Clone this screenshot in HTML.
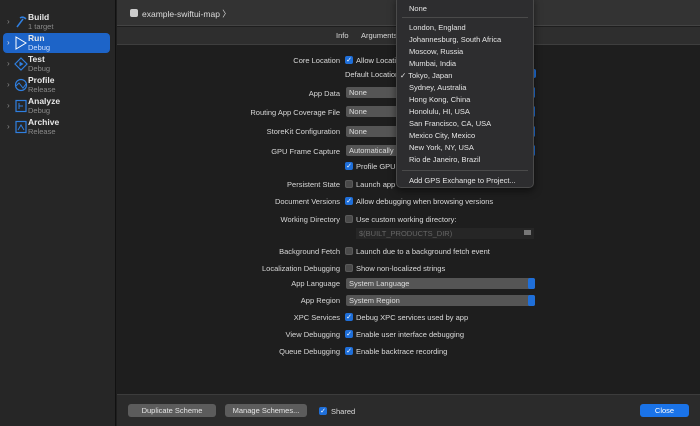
<!DOCTYPE html>
<html><head><style>
*{margin:0;padding:0;box-sizing:border-box}
body{width:700px;height:426px;background:#1e1e1e;font-family:"Liberation Sans",sans-serif;font-size:7.5px;color:#dcdcdc;position:relative;overflow:hidden}
.a{position:absolute;white-space:nowrap}
.side{left:0;top:0;width:116px;height:426px;background:#262626;border-right:1px solid #111}
.item{position:absolute;left:3px;width:107px;height:20px;border-radius:4px}
.item .t{position:absolute;left:25px;top:0px;font-weight:bold;color:#e8e8e8;font-size:8.5px}
.item .s{position:absolute;left:25px;top:10px;color:#8a8a8a;font-size:7.5px}
.item .c{position:absolute;left:4px;top:5px;color:#888;font-size:8px}
.item svg{position:absolute;left:11px;top:3px}
.lbl{right:360px;text-align:right;color:#d8d8d8}
.cb{width:8px;height:8px;border-radius:2px;background:#4a4a4a;border:1px solid #5a5a5a}
.cb.on{background:#1f6fd9;border-color:#1f6fd9;color:#fff;font-size:7px;line-height:7px;text-align:center}
.pop{left:346px;width:189px;height:11px;background:#555;border-radius:2px;color:#ddd;padding-left:3px;line-height:11px}
.pop:after{content:"";position:absolute;right:0;top:0;width:7px;height:11px;background:#1f6fd9;border-radius:2px}
.menu{left:396px;top:-4px;width:138px;height:192px;background:#2d2d2f;border:1px solid #4a4a4a;border-radius:5px;box-shadow:0 3px 8px rgba(0,0,0,.5)}
.mi{position:absolute;left:12px;color:#e6e6e6}
.sep{position:absolute;left:5px;width:126px;height:1px;background:#4a4a4a}
.btn{top:404px;height:13px;background:#5c5c5c;border-radius:3px;color:#e6e6e6;text-align:center;line-height:13px;font-size:7.5px}
</style></head><body>
<div class="a side">
 <div class="item" style="top:12px"><span class="c">›</span><svg width="14" height="14"><path d="M3 12 L9 4 M6 3 Q9 1 12 4" stroke="#2f7fe0" stroke-width="1.5" fill="none"/></svg><span class="t">Build</span><span class="s">1 target</span></div>
 <div class="item" style="top:33px;background:#1d64c8"><span class="c" style="color:#ddd">›</span><svg width="14" height="14"><path d="M2 1 L12 7 L2 13 Z" stroke="#fff" stroke-width="1" fill="none"/></svg><span class="t">Run</span><span class="s" style="color:#cfe0ff">Debug</span></div>
 <div class="item" style="top:54px"><span class="c">›</span><svg width="14" height="14"><path d="M7 1 L13 7 L7 13 L1 7 Z" stroke="#2f7fe0" stroke-width="1.2" fill="none"/><path d="M5.5 4.5 L9.5 7 L5.5 9.5Z" fill="#2f7fe0"/></svg><span class="t">Test</span><span class="s">Debug</span></div>
 <div class="item" style="top:75px"><span class="c">›</span><svg width="14" height="14"><circle cx="7" cy="7" r="5.5" stroke="#2f7fe0" stroke-width="1.2" fill="none"/><path d="M2 8 L5 5 L9 10 L12 6" stroke="#2f7fe0" fill="none"/></svg><span class="t">Profile</span><span class="s">Release</span></div>
 <div class="item" style="top:96px"><span class="c">›</span><svg width="14" height="14"><rect x="2" y="1.5" width="10" height="11" stroke="#2f7fe0" stroke-width="1.2" fill="none"/><path d="M5 4v6M5 7h4" stroke="#2f7fe0"/></svg><span class="t">Analyze</span><span class="s">Debug</span></div>
 <div class="item" style="top:117px"><span class="c">›</span><svg width="14" height="14"><rect x="2" y="1.5" width="10" height="11" stroke="#2f7fe0" stroke-width="1.2" fill="none"/><path d="M4 10 L7 5 L10 10" stroke="#2f7fe0" fill="none"/></svg><span class="t">Archive</span><span class="s">Release</span></div>
</div>
<div class="a" style="left:117px;top:0;width:583px;height:26px;background:#333;border-bottom:1px solid #444"></div>
<div class="a" style="left:130px;top:9px;width:8px;height:8px;background:#ccc;border-radius:2px"></div>
<div class="a" style="left:142px;top:8px;font-size:8.5px;color:#ddd">example-swiftui-map 〉</div>
<div class="a" style="left:117px;top:27px;width:583px;height:18px;background:#2e2e2e;border-bottom:1px solid #3e3e3e"></div>
<div class="a" style="left:336px;top:31px">Info</div>
<div class="a" style="left:361px;top:31px">Arguments</div>

<div class="a lbl" style="top:56px">Core Location</div><div class="a cb on" style="left:345px;top:56px">✓</div><div class="a" style="left:356px;top:56px">Allow Location</div>
<div class="a" style="left:345px;top:70px">Default Location</div><div class="a" style="left:530px;top:69px;width:6px;height:9px;background:#1f6fd9;border-radius:2px"></div>
<div class="a lbl" style="top:89px">App Data</div><div class="a pop" style="top:87px">None</div>
<div class="a lbl" style="top:108px">Routing App Coverage File</div><div class="a pop" style="top:106px">None</div>
<div class="a lbl" style="top:127px">StoreKit Configuration</div><div class="a pop" style="top:126px">None</div>
<div class="a lbl" style="top:147px">GPU Frame Capture</div><div class="a pop" style="top:145px">Automatically</div>
<div class="a cb on" style="left:345px;top:162px">✓</div><div class="a" style="left:356px;top:162px">Profile GPU T</div>
<div class="a lbl" style="top:180px">Persistent State</div><div class="a cb" style="left:345px;top:180px"></div><div class="a" style="left:356px;top:180px">Launch app</div>
<div class="a lbl" style="top:197px">Document Versions</div><div class="a cb on" style="left:345px;top:197px">✓</div><div class="a" style="left:356px;top:197px">Allow debugging when browsing versions</div>
<div class="a lbl" style="top:215px">Working Directory</div><div class="a cb" style="left:345px;top:215px"></div><div class="a" style="left:356px;top:215px">Use custom working directory:</div>
<div class="a" style="left:356px;top:228px;width:178px;height:11px;background:#262626;color:#666;padding-left:3px;line-height:11px">$(BUILT_PRODUCTS_DIR)</div><div class="a" style="left:524px;top:230px;width:7px;height:5px;background:#777"></div>
<div class="a lbl" style="top:247px">Background Fetch</div><div class="a cb" style="left:345px;top:247px"></div><div class="a" style="left:356px;top:247px">Launch due to a background fetch event</div>
<div class="a lbl" style="top:264px">Localization Debugging</div><div class="a cb" style="left:345px;top:264px"></div><div class="a" style="left:356px;top:264px">Show non-localized strings</div>
<div class="a lbl" style="top:279px">App Language</div><div class="a pop" style="top:278px">System Language</div>
<div class="a lbl" style="top:296px">App Region</div><div class="a pop" style="top:295px">System Region</div>
<div class="a lbl" style="top:313px">XPC Services</div><div class="a cb on" style="left:345px;top:313px">✓</div><div class="a" style="left:356px;top:313px">Debug XPC services used by app</div>
<div class="a lbl" style="top:330px">View Debugging</div><div class="a cb on" style="left:345px;top:330px">✓</div><div class="a" style="left:356px;top:330px">Enable user interface debugging</div>
<div class="a lbl" style="top:347px">Queue Debugging</div><div class="a cb on" style="left:345px;top:347px">✓</div><div class="a" style="left:356px;top:347px">Enable backtrace recording</div>

<div class="a menu">
 <div class="mi" style="top:7px">None</div>
 <div class="sep" style="top:20px"></div>
 <div class="mi" style="top:26px">London, England</div>
 <div class="mi" style="top:38px">Johannesburg, South Africa</div>
 <div class="mi" style="top:50px">Moscow, Russia</div>
 <div class="mi" style="top:62px">Mumbai, India</div>
 <div class="mi" style="top:74px;left:3px">✓ Tokyo, Japan</div>
 <div class="mi" style="top:86px">Sydney, Australia</div>
 <div class="mi" style="top:98px">Hong Kong, China</div>
 <div class="mi" style="top:110px">Honolulu, HI, USA</div>
 <div class="mi" style="top:122px">San Francisco, CA, USA</div>
 <div class="mi" style="top:134px">Mexico City, Mexico</div>
 <div class="mi" style="top:146px">New York, NY, USA</div>
 <div class="mi" style="top:158px">Rio de Janeiro, Brazil</div>
 <div class="sep" style="top:173px"></div>
 <div class="mi" style="top:179px">Add GPS Exchange to Project...</div>
</div>

<div class="a" style="left:117px;top:394px;width:583px;height:32px;background:#2b2b2b;border-top:1px solid #3c3c3c"></div>
<div class="a btn" style="left:128px;width:88px">Duplicate Scheme</div>
<div class="a btn" style="left:225px;width:82px">Manage Schemes...</div>
<div class="a cb on" style="left:319px;top:407px">✓</div><div class="a" style="left:331px;top:407px">Shared</div>
<div class="a btn" style="left:640px;width:49px;background:#1a73e8;color:#fff">Close</div>
</body></html>
